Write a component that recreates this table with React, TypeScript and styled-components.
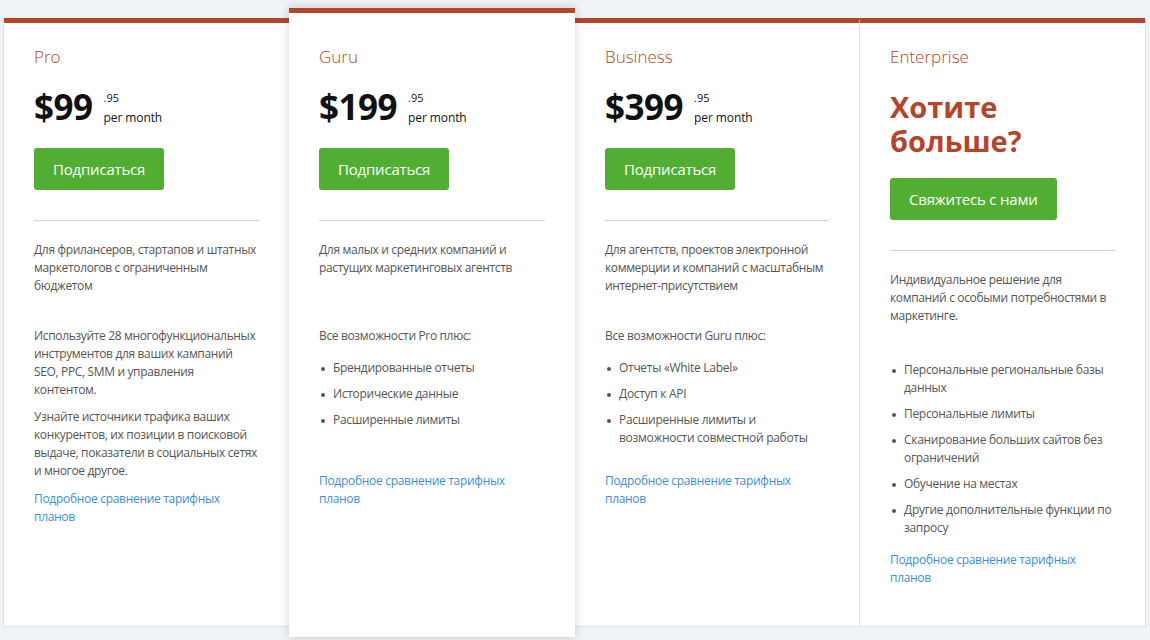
import React from "react";
import styled, { createGlobalStyle } from "styled-components";

const Global = createGlobalStyle`
  html, body { margin: 0; padding: 0; background: #eff3f6; }
  body { font-family: "Open Sans", "Noto Sans", sans-serif; }
  * { box-sizing: border-box; }
`;

const Page = styled.div`
  width: 1150px;
  height: 640px;
  padding: 18px 0 0 3px;
  overflow: hidden;
`;

const Row = styled.div`
  display: grid;
  grid-template-columns: 285px 286px 284px 286px;
  width: 1143px;
  height: 609px;
  border-left: 1px solid #dfe3e6;
  border-right: 1px solid #dfe3e6;
  border-bottom: 1px solid #dfe3e6;
  background: #fff;
`;

const Card = styled.div<{ $featured?: boolean; $divider?: boolean }>`
  position: relative;
  background: #fff;
  border-top: 5px solid #b5452a;
  padding: ${(p) => (p.$featured ? "33px 30px 0" : "23px 30px 0")};
  margin: ${(p) => (p.$featured ? "-10px 0 -11px" : "0")};
  z-index: ${(p) => (p.$featured ? 2 : 1)};
  box-shadow: ${(p) => (p.$featured ? "0 0 9px rgba(0,0,0,0.18)" : "none")};
  border-left: ${(p) => (p.$divider ? "1px solid #dfe3e6" : "0")};
`;

const Title = styled.div`
  font-size: 17px;
  font-weight: 300;
  color: #b5452a;
  line-height: 22px;
  height: 22px;
`;

const PriceRow = styled.div`
  display: flex;
  align-items: flex-start;
  margin-top: 19px;
  height: 40px;
`;

const Amount = styled.div`
  font-size: 35px;
  font-weight: 700;
  color: #111;
  line-height: 40px;
  letter-spacing: -0.5px;
`;

const Cents = styled.div`
  margin-left: 11px;
  display: flex;
  flex-direction: column;
  padding-top: 4px;
  font-size: 11px;
  color: #111;
  line-height: 14px;
`;

const PerMonth = styled.span`
  font-size: 12px;
  margin-top: 6px;
  letter-spacing: -0.1px;
`;

const Heading = styled.div`
  margin-top: 22px;
  font-size: 29px;
  font-weight: 700;
  line-height: 34px;
  color: #b5452a;
`;

const Button = styled.button<{ $mt?: number }>`
  display: inline-flex;
  align-items: center;
  justify-content: center;
  height: 42px;
  padding: 0 19px;
  border: 0;
  border-radius: 3px;
  background: #52ae32;
  color: #fff;
  font-family: inherit;
  font-size: 15px;
  letter-spacing: -0.2px;
  margin-top: ${(p) => p.$mt ?? 21}px;
  cursor: pointer;
`;

const Divider = styled.hr`
  border: 0;
  border-top: 1px solid #dcccd2;
  margin: 30px 0 0;
`;

const Desc = styled.p`
  margin: 20px 0 0;
  min-height: 54px;
  font-size: 12px;
  letter-spacing: -0.35px;
  line-height: 18px;
  color: #555;
`;

const Para = styled.p<{ $mt: number }>`
  margin: ${(p) => p.$mt}px 0 0;
  font-size: 12px;
  letter-spacing: -0.35px;
  line-height: 18px;
  color: #555;
`;

const List = styled.ul<{ $mt: number; $minH?: number }>`
  list-style: none;
  margin: ${(p) => p.$mt}px 0 0;
  padding: 0;
  min-height: ${(p) => p.$minH ?? 0}px;
`;

const Item = styled.li`
  position: relative;
  padding-left: 14px;
  font-size: 12px;
  letter-spacing: -0.3px;
  line-height: 18px;
  color: #555;
  & + & { margin-top: 8px; }
  &::before {
    content: "";
    position: absolute;
    left: 2px;
    top: 8px;
    width: 4px;
    height: 4px;
    border-radius: 50%;
    background: #555;
  }
`;

const Link = styled.a<{ $mt: number }>`
  display: block;
  margin-top: ${(p) => p.$mt}px;
  font-size: 12px;
  letter-spacing: -0.3px;
  line-height: 18px;
  color: #3a8fd9;
  text-decoration: none;
  width: 190px;
`;

const Price = ({ amount }: { amount: string }) => (
  <PriceRow>
    <Amount>{amount}</Amount>
    <Cents>
      <span>.95</span>
      <PerMonth>per month</PerMonth>
    </Cents>
  </PriceRow>
);

const LINK = "Подробное сравнение тарифных планов";

export default function App() {
  return (
    <Page>
      <Global />
      <Row>
        <Card>
          <Title>Pro</Title>
          <Price amount="$99" />
          <Button>Подписаться</Button>
          <Divider />
          <Desc>Для фрилансеров, стартапов и штатных маркетологов с ограниченным бюджетом</Desc>
          <Para $mt={32}>
            Используйте 28 многофункциональных инструментов для ваших кампаний SEO, PPC, SMM и управления
            <br />
            контентом.
          </Para>
          <Para $mt={9}>
            Узнайте источники трафика ваших конкурентов, их позиции в поисковой выдаче, показатели в социальных сетях и многое другое.
          </Para>
          <Link $mt={10}>{LINK}</Link>
        </Card>
        <Card $featured>
          <Title>Guru</Title>
          <Price amount="$199" />
          <Button>Подписаться</Button>
          <Divider />
          <Desc>Для малых и средних компаний и растущих маркетинговых агентств</Desc>
          <Para $mt={32}>Все возможности Pro плюс:</Para>
          <List $mt={14} $minH={96}>
            <Item>Брендированные отчеты</Item>
            <Item>Исторические данные</Item>
            <Item>Расширенные лимиты</Item>
          </List>
          <Link $mt={17}>{LINK}</Link>
        </Card>
        <Card>
          <Title>Business</Title>
          <Price amount="$399" />
          <Button>Подписаться</Button>
          <Divider />
          <Desc>Для агентств, проектов электронной коммерции и компаний с масштабным интернет-присутствием</Desc>
          <Para $mt={32}>Все возможности Guru плюс:</Para>
          <List $mt={14} $minH={96}>
            <Item>Отчеты «White Label»</Item>
            <Item>Доступ к API</Item>
            <Item>Расширенные лимиты и возможности совместной работы</Item>
          </List>
          <Link $mt={17}>{LINK}</Link>
        </Card>
        <Card $divider>
          <Title>Enterprise</Title>
          <Heading>Хотите больше?</Heading>
          <Button $mt={20}>Свяжитесь с нами</Button>
          <Divider />
          <Desc>Индивидуальное решение для компаний с особыми потребностями в маркетинге.</Desc>
          <List $mt={36}>
            <Item>Персональные региональные базы данных</Item>
            <Item>Персональные лимиты</Item>
            <Item>Сканирование больших сайтов без ограничений</Item>
            <Item>Обучение на местах</Item>
            <Item>Другие дополнительные функции по запросу</Item>
          </List>
          <Link $mt={14}>{LINK}</Link>
        </Card>
      </Row>
    </Page>
  );
}
